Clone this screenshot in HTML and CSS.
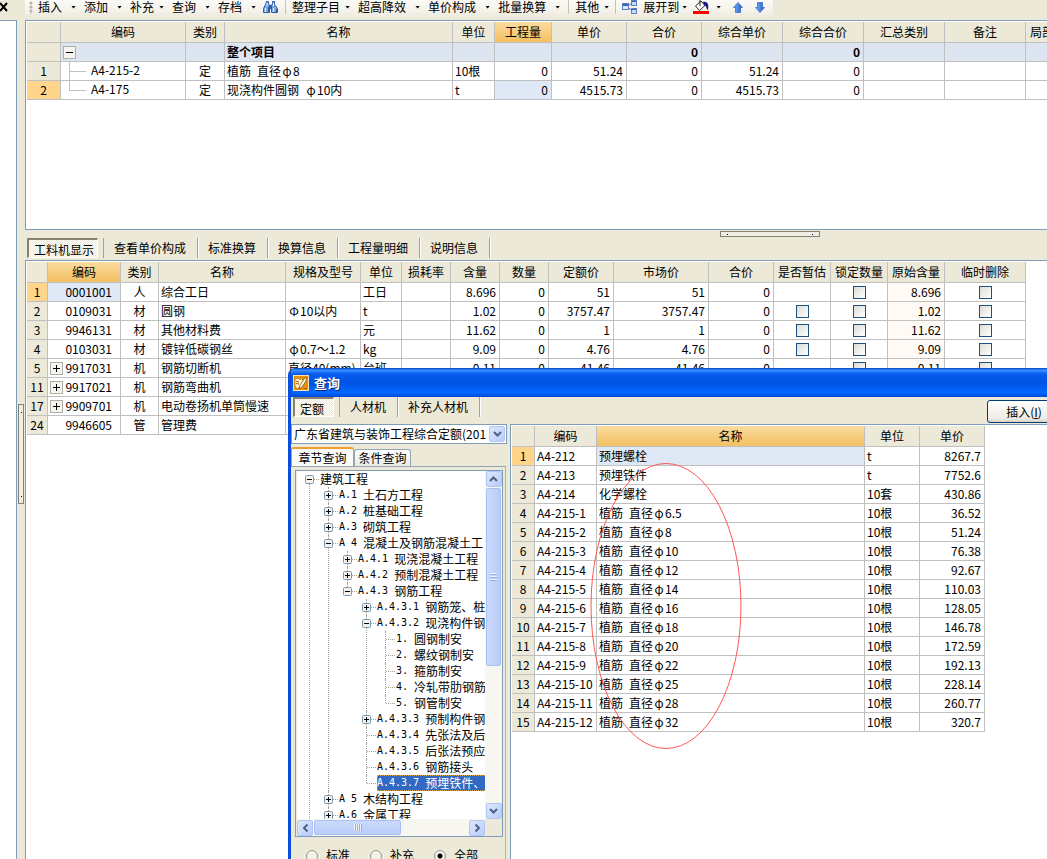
FILE: index.html
```html
<!DOCTYPE html>
<html lang="zh-CN">
<head>
<meta charset="utf-8">
<title>工程量计价</title>
<link rel="stylesheet" href="styles.css">
</head>
<body>
<svg class="defs" width="0" height="0" aria-hidden="true">
  <defs>
    <linearGradient id="blue" x1="0" y1="0" x2="1" y2="0"><stop offset="0" stop-color="#7fb4f5"/><stop offset="1" stop-color="#1c57c8"/></linearGradient>
    <symbol id="minus" viewBox="0 0 9 9"><rect x=".5" y=".5" width="8" height="8" rx="1" fill="#f4f2ea" stroke="#7898b5"/><path d="M2 4.500h5" stroke="#000"/></symbol>
    <symbol id="plus" viewBox="0 0 9 9"><rect x=".5" y=".5" width="8" height="8" rx="1" fill="#f4f2ea" stroke="#7898b5"/><path d="M2 4.500h5M4.500 2v5" stroke="#000"/></symbol>
    <symbol id="chev" viewBox="0 0 9 6"><path d="M1 1l3.500 3.500L8 1" fill="none" stroke="#4d6185" stroke-width="2"/></symbol>
  </defs>
</svg>
<div class="app">
  <aside class="side">
    <button class="close" aria-label="关闭"><svg width="9" height="10" viewBox="0 0 9 10"><path d="M0 1l7 8M7 1L0 9" stroke="#000" stroke-width="2"/></svg></button>
    <div class="side-body"></div>
  </aside>
  <div class="vsplit"><span class="vgrip"></span></div>
  <main class="main">
    <div class="topbar">
      <div class="toolbar">
        <span class="grip"></span>
        <button>插入<i></i></button>
        <button>添加<i></i></button>
        <button class="tight">补充<i></i></button>
        <button>查询<i></i></button>
        <button class="snug">存档<i></i></button>
        <button class="icon" aria-label="查找"><svg width="17" height="15" viewBox="0 0 17 15"><path d="M4.500 1.500h2v2l1 2v7h-6v-4l2-4zM10.500 1.500h2v3l3 4v4h-6v-7l1-2z" fill="#7fa6dc" stroke="#2f5fa8"/><path d="M7 5h3v4H7z" fill="#2f5fa8"/><path d="M3.500 8v4M11.500 8v4M5 3v3M11.500 3v3" stroke="#e6f0fc"/><path d="M6.500 7v6M14.500 9v4" stroke="#2b56a0"/></svg></button>
        <span class="sep"></span>
        <button class="tight">整理子目<i></i></button>
        <button>超高降效<i></i></button>
        <button>单价构成<i></i></button>
        <button>批量换算<i></i></button>
        <span class="sep"></span>
        <button class="tight snug">其他<i></i></button>
        <span class="sep"></span>
        <button class="tight snug"><svg width="16" height="15" viewBox="0 0 16 15"><path d="M6 6l4-3M6 7l4 4" stroke="#4a72c0" fill="none"/><rect x=".5" y="3.500" width="6" height="6" fill="#dceafb" stroke="#5a80c4"/><path d="M1 5h5" stroke="#3a66b8" stroke-width="2"/><rect x="9.500" y=".5" width="5" height="5" fill="#c9dcf6" stroke="#5a80c4"/><path d="M10 1.500h4" stroke="#3a66b8"/><rect x="9.500" y="8.500" width="5" height="5" fill="#c9dcf6" stroke="#5a80c4"/><path d="M10 9.500h4" stroke="#3a66b8"/></svg><span class="lbl">展开到</span><i></i></button>
        <button class="icon fill" aria-label="填充颜色"><svg width="16" height="16" viewBox="0 0 16 16"><path d="M2.500 7l5.500-5 4 4.500-5.500 5z" fill="#fff" stroke="#222"/><path d="M7 0v7" stroke="#222"/><path d="M10 3c5-1 6 3 5 8-2-1-1-4-4-5z" fill="#15158c"/><path d="M0 12h16v3H0z" fill="#f00"/></svg><i></i></button>
        <button class="icon arrow" aria-label="上移"><svg width="10" height="11" viewBox="0 0 10 11"><path d="M5 .5l4.500 5H7.500v5h-5v-5H.5z" fill="url(#blue)" stroke="#2a5fc4" stroke-width=".7"/></svg></button>
        <button class="icon arrow" aria-label="下移"><svg width="10" height="11" viewBox="0 0 10 11"><path d="M5 10.500L.5 5.500h2v-5h5v5h2z" fill="url(#blue)" stroke="#2a5fc4" stroke-width=".7"/></svg></button>
      </div>
    </div>
    <section class="pane upper">
      <table class="grid wide">
        <colgroup><col class="w34"><col class="w125"><col class="w39"><col class="w228"><col class="w42"><col class="w57"><col class="w75"><col class="w75"><col class="w81"><col class="w81"><col class="w81"><col class="w81"><col class="w57"></colgroup>
        <thead><tr><th></th><th>编码</th><th>类别</th><th>名称</th><th>单位</th><th class="on">工程量</th><th>单价</th><th>合价</th><th>综合单价</th><th>综合合价</th><th>汇总类别</th><th>备注</th><th>局部汇总</th></tr></thead>
        <tbody>
          <tr class="total"><th></th><td class="tog"><button class="box minus" aria-label="折叠"></button></td><td></td><td class="name">整个项目</td><td></td><td></td><td></td><td class="r">0</td><td></td><td class="r">0</td><td></td><td></td><td></td></tr>
          <tr><th>1</th><td class="tog"><span class="branch mid"></span>A4-215-2</td><td class="c">定</td><td class="name">植筋<span class="n"> </span>直径<span class="phi">φ</span>8</td><td>10根</td><td class="r">0</td><td class="r">51.24</td><td class="r">0</td><td class="r">51.24</td><td class="r">0</td><td></td><td></td><td></td></tr>
          <tr><th class="cur">2</th><td class="tog"><span class="branch end"></span>A4-175</td><td class="c">定</td><td class="name">现浇构件圆钢<span class="n"> </span><span class="phi">φ</span>10内</td><td>t</td><td class="r sel">0</td><td class="r">4515.73</td><td class="r">0</td><td class="r">4515.73</td><td class="r">0</td><td></td><td></td><td></td></tr>
        </tbody>
      </table>
    </section>
    <div class="hsplit"><span class="hgrip"></span>
      <nav class="tabs">
        <button class="pressed">工料机显示</button><button>查看单价构成</button><button>标准换算</button><button>换算信息</button><button>工程量明细</button><button>说明信息</button>
      </nav>
    </div>
    <section class="pane lower">
      <table class="grid detail">
        <colgroup><col class="w21"><col class="w73"><col class="w38"><col class="w127"><col class="w75"><col class="w41"><col class="w49"><col class="w49"><col class="w49"><col class="w65"><col class="w95"><col class="w65"><col class="w57"><col class="w57"><col class="w57"><col class="w81"></colgroup>
        <thead><tr><th></th><th class="on">编码</th><th>类别</th><th>名称</th><th>规格及型号</th><th>单位</th><th>损耗率</th><th>含量</th><th>数量</th><th>定额价</th><th>市场价</th><th>合价</th><th>是否暂估</th><th>锁定数量</th><th>原始含量</th><th>临时删除</th></tr></thead>
        <tbody>
          <tr><th class="cur">1</th><td class="code sel">0001001</td><td class="c">人</td><td>综合工日</td><td></td><td>工日</td><td></td><td class="r">8.696</td><td class="r">0</td><td class="r">51</td><td class="r">51</td><td class="r">0</td><td></td><td class="c"><input type="checkbox" aria-label="锁定数量"></td><td class="r orig">8.696</td><td class="c"><input type="checkbox" aria-label="临时删除"></td></tr>
          <tr><th>2</th><td class="code">0109031</td><td class="c">材</td><td>圆钢</td><td><span class="phi">Φ</span>10以内</td><td>t</td><td></td><td class="r">1.02</td><td class="r">0</td><td class="r">3757.47</td><td class="r">3757.47</td><td class="r">0</td><td class="c"><input type="checkbox" aria-label="是否暂估"></td><td class="c"><input type="checkbox" aria-label="锁定数量"></td><td class="r orig">1.02</td><td class="c"><input type="checkbox" aria-label="临时删除"></td></tr>
          <tr><th>3</th><td class="code">9946131</td><td class="c">材</td><td>其他材料费</td><td></td><td>元</td><td></td><td class="r">11.62</td><td class="r">0</td><td class="r">1</td><td class="r">1</td><td class="r">0</td><td class="c"><input type="checkbox" aria-label="是否暂估"></td><td class="c"><input type="checkbox" aria-label="锁定数量"></td><td class="r orig">11.62</td><td class="c"><input type="checkbox" aria-label="临时删除"></td></tr>
          <tr><th>4</th><td class="code">0103031</td><td class="c">材</td><td>镀锌低碳钢丝</td><td><span class="phi">φ</span>0.7～1.2</td><td>kg</td><td></td><td class="r">9.09</td><td class="r">0</td><td class="r">4.76</td><td class="r">4.76</td><td class="r">0</td><td class="c"><input type="checkbox" aria-label="是否暂估"></td><td class="c"><input type="checkbox" aria-label="锁定数量"></td><td class="r orig">9.09</td><td class="c"><input type="checkbox" aria-label="临时删除"></td></tr>
          <tr><th>5</th><td class="code"><button class="box plus" aria-label="展开"></button>9917031</td><td class="c">机</td><td>钢筋切断机</td><td>直径40(mm)</td><td>台班</td><td></td><td class="r">0.11</td><td class="r">0</td><td class="r">41.46</td><td class="r">41.46</td><td class="r">0</td><td></td><td class="c"><input type="checkbox" aria-label="锁定数量"></td><td class="r orig">0.11</td><td class="c"><input type="checkbox" aria-label="临时删除"></td></tr>
          <tr><th>11</th><td class="code"><button class="box plus" aria-label="展开"></button>9917021</td><td class="c">机</td><td>钢筋弯曲机</td><td></td><td></td><td></td><td></td><td></td><td></td><td></td><td></td><td></td><td></td><td></td><td></td></tr>
          <tr><th>17</th><td class="code"><button class="box plus" aria-label="展开"></button>9909701</td><td class="c">机</td><td>电动卷扬机单筒慢速</td><td></td><td></td><td></td><td></td><td></td><td></td><td></td><td></td><td></td><td></td><td></td><td></td></tr>
          <tr><th>24</th><td class="code">9946605</td><td class="c">管</td><td>管理费</td><td></td><td></td><td></td><td></td><td></td><td></td><td></td><td></td><td></td><td></td><td></td><td></td></tr>
        </tbody>
      </table>
    </section>
  </main>
</div>

<div class="dialog" role="dialog" aria-labelledby="dlg">
  <header class="title">
    <svg width="16" height="16" viewBox="0 0 16 16"><rect width="16" height="16" fill="#f6e3b0"/><rect x="1" y="1" width="14" height="14" fill="#e8920c"/><path d="M2 4l3-1 2 2 2-2 1 3-2 5-4 3-2-3z" fill="#fff6d8" stroke="#a65a00" stroke-width=".6"/><path d="M14 2l-1 4-4 6-3 2 1-4 4-6z" fill="#fffdf0" stroke="#8a4a00" stroke-width=".8"/><path d="M3 6l3 1M3 8.500l3 .5M10 13.500h4" stroke="#a65a00"/></svg>
    <h1 id="dlg">查询</h1>
  </header>
  <div class="dlg-body">
    <div class="dlg-top">
      <nav class="tabs">
        <button class="pressed">定额</button><button>人材机</button><button>补充人材机</button>
      </nav>
      <button class="insert">插入(<u>I</u>)</button>
    </div>
    <div class="cols">
      <div class="left">
        <label class="combo"><select aria-label="定额库"><option>广东省建筑与装饰工程综合定额(201</option></select><span class="xpbtn"><svg width="9" height="6"><use href="#chev"/></svg></span></label>
        <div class="pagetabs"><button class="active">章节查询</button><button>条件查询</button></div>
        <div class="page">
          <div class="treebox">
            <ul class="tree">
              <li><div><svg class="tg"><use href="#minus"/></svg>建筑工程</div>
                <ul>
                  <li><div><svg class="tg"><use href="#plus"/></svg><span class="n">A.1 </span>土石方工程</div></li>
                  <li><div><svg class="tg"><use href="#plus"/></svg><span class="n">A.2 </span>桩基础工程</div></li>
                  <li><div><svg class="tg"><use href="#plus"/></svg><span class="n">A.3 </span>砌筑工程</div></li>
                  <li><div><svg class="tg"><use href="#minus"/></svg><span class="n">A 4 </span>混凝土及钢筋混凝土工</div>
                    <ul>
                      <li><div><svg class="tg"><use href="#plus"/></svg><span class="n">A.4.1 </span>现浇混凝土工程</div></li>
                      <li><div><svg class="tg"><use href="#plus"/></svg><span class="n">A.4.2 </span>预制混凝土工程</div></li>
                      <li><div><svg class="tg"><use href="#minus"/></svg><span class="n">A.4.3 </span>钢筋工程</div>
                        <ul>
                          <li><div><svg class="tg"><use href="#plus"/></svg><span class="n">A.4.3.1 </span>钢筋笼、桩</div></li>
                          <li><div><svg class="tg"><use href="#minus"/></svg><span class="n">A.4.3.2 </span>现浇构件钢</div>
                            <ul>
                              <li><div><span class="tg"></span><span class="n">1. </span>圆钢制安</div></li>
                              <li><div><span class="tg"></span><span class="n">2. </span>螺纹钢制安</div></li>
                              <li><div><span class="tg"></span><span class="n">3. </span>箍筋制安</div></li>
                              <li><div><span class="tg"></span><span class="n">4. </span>冷轧带肋钢筋</div></li>
                              <li><div><span class="tg"></span><span class="n">5. </span>钢管制安</div></li>
                            </ul></li>
                          <li><div><svg class="tg"><use href="#plus"/></svg><span class="n">A.4.3.3 </span>预制构件钢</div></li>
                          <li><div><span class="tg"></span><span class="n">A.4.3.4 </span>先张法及后</div></li>
                          <li><div><span class="tg"></span><span class="n">A.4.3.5 </span>后张法预应</div></li>
                          <li><div><span class="tg"></span><span class="n">A.4.3.6 </span>钢筋接头</div></li>
                          <li><div><span class="tg"></span><span class="chosen"><span class="n">A.4.3.7 </span>预埋铁件、</span></div></li>
                        </ul></li>
                    </ul></li>
                  <li><div><svg class="tg"><use href="#plus"/></svg><span class="n">A 5 </span>木结构工程</div></li>
                  <li><div><svg class="tg"><use href="#plus"/></svg><span class="n">A.6 </span>金属工程</div></li>
                  <li><div></div></li>
                </ul></li>
              <li><div></div></li>
            </ul>
            <div class="vbar"><span class="xpbtn up"><svg width="9" height="6"><use href="#chev"/></svg></span><span class="thumb"></span><span class="xpbtn"><svg width="9" height="6"><use href="#chev"/></svg></span></div>
            <div class="hbar"><span class="xpbtn lt"><svg width="9" height="6"><use href="#chev"/></svg></span><span class="thumb"></span><span class="xpbtn rt"><svg width="9" height="6"><use href="#chev"/></svg></span></div>
          </div>
          <div class="radios">
            <label><input type="radio" name="scope">标准</label>
            <label><input type="radio" name="scope">补充</label>
            <label><input type="radio" name="scope" checked>全部</label>
          </div>
        </div>
      </div>
      <div class="right">
        <table class="grid result">
          <colgroup><col class="w23"><col class="w62"><col class="w268"><col class="w55"><col class="w65"></colgroup>
          <thead><tr><th></th><th>编码</th><th class="on">名称</th><th>单位</th><th>单价</th></tr></thead>
          <tbody>
            <tr><th class="cur">1</th><td>A4-212</td><td class="sel">预埋螺栓</td><td>t</td><td class="r">8267.7</td></tr>
            <tr><th>2</th><td>A4-213</td><td>预埋铁件</td><td>t</td><td class="r">7752.6</td></tr>
            <tr><th>3</th><td>A4-214</td><td>化学螺栓</td><td>10套</td><td class="r">430.86</td></tr>
            <tr><th>4</th><td>A4-215-1</td><td>植筋<span class="n"> </span>直径<span class="phi">φ</span>6.5</td><td>10根</td><td class="r">36.52</td></tr>
            <tr><th>5</th><td>A4-215-2</td><td>植筋<span class="n"> </span>直径<span class="phi">φ</span>8</td><td>10根</td><td class="r">51.24</td></tr>
            <tr><th>6</th><td>A4-215-3</td><td>植筋<span class="n"> </span>直径<span class="phi">φ</span>10</td><td>10根</td><td class="r">76.38</td></tr>
            <tr><th>7</th><td>A4-215-4</td><td>植筋<span class="n"> </span>直径<span class="phi">φ</span>12</td><td>10根</td><td class="r">92.67</td></tr>
            <tr><th>8</th><td>A4-215-5</td><td>植筋<span class="n"> </span>直径<span class="phi">φ</span>14</td><td>10根</td><td class="r">110.03</td></tr>
            <tr><th>9</th><td>A4-215-6</td><td>植筋<span class="n"> </span>直径<span class="phi">φ</span>16</td><td>10根</td><td class="r">128.05</td></tr>
            <tr><th>10</th><td>A4-215-7</td><td>植筋<span class="n"> </span>直径<span class="phi">φ</span>18</td><td>10根</td><td class="r">146.78</td></tr>
            <tr><th>11</th><td>A4-215-8</td><td>植筋<span class="n"> </span>直径<span class="phi">φ</span>20</td><td>10根</td><td class="r">172.59</td></tr>
            <tr><th>12</th><td>A4-215-9</td><td>植筋<span class="n"> </span>直径<span class="phi">φ</span>22</td><td>10根</td><td class="r">192.13</td></tr>
            <tr><th>13</th><td>A4-215-10</td><td>植筋<span class="n"> </span>直径<span class="phi">φ</span>25</td><td>10根</td><td class="r">228.14</td></tr>
            <tr><th>14</th><td>A4-215-11</td><td>植筋<span class="n"> </span>直径<span class="phi">φ</span>28</td><td>10根</td><td class="r">260.77</td></tr>
            <tr><th>15</th><td>A4-215-12</td><td>植筋<span class="n"> </span>直径<span class="phi">φ</span>32</td><td>10根</td><td class="r">320.7</td></tr>
          </tbody>
        </table>
        <svg class="mark" width="152" height="288" viewBox="0 0 152 288"><ellipse cx="76" cy="144" rx="75" ry="142.500" fill="none" stroke="#f55" /></svg>
      </div>
    </div>
  </div>
</div>
</body>
</html>
```
FILE: styles.css
```css
* { box-sizing: border-box; }
html, body { height: 100%; }
body {
  margin: 0;
  overflow: hidden;
  background: #ece9d8;
  color: #000;
  font: 12px/14px "Noto Sans CJK SC", sans-serif;
}
button, select { font: inherit; color: inherit; border: 0; padding: 0; margin: 0; background: none; white-space: nowrap; }
.defs { position: absolute; }
.n { font-family: "DejaVu Sans Mono", "Noto Sans CJK SC", monospace; font-size: 10px; line-height: 10px; white-space: pre; }
.phi { display: inline-block; width: 12px; text-align: center; }

.app { display: flex; height: 100%; }
.side { width: 17px; display: flex; flex-direction: column; flex: none; }
.close { height: 20px; display: flex; padding-top: 2px; }
.side-body { flex: 1; background: #fff; border: solid #7f9db9; border-width: 1px 1px 0 0; }
.vsplit { width: 8px; flex: none; display: flex; justify-content: center; padding-top: 404px; }
.vgrip { width: 6px; height: 100px; border: 1px solid #85836f; background: linear-gradient(#00008b, #00008b) center 7px / 1px 1px no-repeat, linear-gradient(#00008b, #00008b) center 91px / 1px 1px no-repeat, #f0eee2; }
.main { flex: 1; min-width: 0; display: flex; flex-direction: column; }

/* toolbar */
.topbar { height: 20px; flex: none; display: flex; }
.toolbar { display: flex; align-items: center; height: 20px; padding: 0 2px 6px 4px; background: linear-gradient(#fbfaf7, #f3f1e8 60%, #e9e6d6); white-space: nowrap; }
.toolbar button { display: flex; align-items: center; gap: 9px; padding-right: 8px; flex: none; }
.toolbar button.tight { gap: 5px; }
.toolbar button.snug { padding-right: 6px; }
.toolbar i { width: 5px; height: 3px; background: #000; clip-path: polygon(0 0, 100% 0, 50% 100%); }
.toolbar .grip { width: 9px; height: 13px; background: radial-gradient(circle at 2px 2px, #b8b5a5 1px, transparent 2px) 0 0 / 9px 4px; }
.toolbar button.icon { gap: 7px; padding-right: 6px; }
.toolbar button.arrow { padding: 0 6px; }
.toolbar .sep { width: 1px; height: 14px; background: #c5c2b2; margin-right: 6px; flex: none; }
.toolbar .lbl { margin-right: -2px; }

/* panes */
.pane { background: #fff; border: 1px solid #7f9db9; border-right: 0; padding: 1px 0 0 1px; overflow: hidden; }
.upper { height: 210px; flex: none; }
.lower { flex: 1; border-bottom: 0; }
.hsplit { height: 30px; flex: none; position: relative; padding: 8px 0 0 2px; }
.hgrip { position: absolute; top: 1px; left: 68%; width: 100px; height: 6px; border: 1px solid #85836f; background: linear-gradient(#00008b, #00008b) 6px center / 1px 1px no-repeat, linear-gradient(#00008b, #00008b) 91px center / 1px 1px no-repeat, #f0eee2; }

/* grids */
.grid { table-layout: fixed; border-collapse: separate; border-spacing: 0; }
.wide { width: 1056px; }
.detail { width: 999px; }
.result { width: 473px; }
.grid th, .grid td { height: 19px; padding: 0 2px; border: solid #c0c0c0; border-width: 0 1px 1px 0; line-height: 16px; font-weight: 400; text-align: left; white-space: nowrap; overflow: hidden; }
.grid th { background: #ece9d8; text-align: center; padding: 0; }
.grid thead th { height: 21px; }
.grid th.on { background: linear-gradient(#fadc9f, #f3bf62); }
.grid th.cur { background: #ffd58c; }
.grid td.sel { background: #dfe8f5; }
.grid td.c { text-align: center; padding: 0; }
.grid td.r { text-align: right; padding-right: 3px; }
.grid td.code { text-align: right; padding-right: 8px; }
.grid td.orig { background: #fffaf5; }
.grid .total td { background: #dde6f0; font-weight: 700; }
.grid input { appearance: none; display: block; width: 13px; height: 13px; margin: 0 auto; border: 1px solid #1c5180; background: linear-gradient(135deg, #dcdcd7, #fff); }
.box { display: inline-block; width: 13px; height: 13px; border: 1px solid #b0aea2; vertical-align: middle; background: linear-gradient(#000, #000) center / 7px 1px no-repeat, #f6f5f0; }
.box.plus { float: left; margin: 2px 0; background: linear-gradient(#000, #000) center / 7px 1px no-repeat, linear-gradient(#000, #000) center / 1px 7px no-repeat, #f6f5f0; }
.tog .box { display: block; }
.branch { display: block; float: left; width: 16px; height: 18px; margin: 0 6px; }
.branch::before { content: ""; display: block; width: 16px; height: 9px; border: solid #c0c0c0; border-width: 0 0 1px 1px; }
.branch.mid::after { content: ""; display: block; width: 1px; height: 9px; background: #c0c0c0; }

/* flat tabs */
.tabs { display: flex; height: 20px; }
.tabs button { padding: 0 11px 0 10px; border-right: 1px solid #a5a293; box-shadow: 1px 0 #fff; }
.tabs .pressed { padding: 2px 3px 0 5px; margin-right: 5px; border: solid; border-width: 2px 1px 1px 2px; border-color: #85836f #fff #fff #85836f; background: repeating-conic-gradient(#ece9d8 0 25%, #fff 0 50%) 0 0 / 2px 2px; box-shadow: none; }
.tabs .pressed + button { border-left: 1px solid #a5a293; }

/* dialog */
.dialog { position: absolute; left: 288px; top: 368px; right: 0; bottom: 0; display: flex; flex-direction: column; overflow: hidden; border-left: 3px solid #0a4ee0; border-top-left-radius: 7px; background: #ece9d8; }
.title { height: 29px; flex: none; display: flex; align-items: center; gap: 5px; padding: 1px 0 0 3px; margin-left: -1px; background: linear-gradient(#0842c8, #3a93ff 8%, #0a5cf0 20%, #0054e3 50%, #0268ff 85%, #0047d0); }
.title h1 { margin: 0; font-size: 13px; line-height: 16px; font-weight: 700; color: #fff; text-shadow: 1px 1px #0a2a80; }
.dlg-body { flex: 1; min-height: 0; display: flex; flex-direction: column; }
.dlg-top { display: flex; justify-content: space-between; height: 27px; flex: none; padding-left: 2px; }
.dlg-top .tabs .pressed { padding-right: 9px; }
.insert { width: 74px; height: 23px; margin: 3px -14px 0 0; border: 1px solid #003c74; border-radius: 3px; background: linear-gradient(#fff, #ecebe5 85%, #d6d0c5); }
.cols { flex: 1; min-height: 0; display: flex; gap: 3px; }
.left { width: 216px; flex: none; display: flex; flex-direction: column; min-height: 0; }
.combo { display: flex; height: 20px; border: 1px solid #7f9db9; background: #fff; padding: 1px; flex: none; }
.combo select { flex: 1; min-width: 0; appearance: none; height: 16px; padding: 0 0 0 1px; line-height: 16px; outline: 0; }
.xpbtn { display: flex; align-items: center; justify-content: center; flex: none; width: 16px; height: 16px; border: 1px solid #b0c6f5; border-radius: 2px; background: linear-gradient(135deg, #dce7fe, #b9cdf8); }
.xpbtn.up svg { transform: rotate(180deg); }
.xpbtn.lt svg { transform: rotate(90deg); }
.xpbtn.rt svg { transform: rotate(-90deg); }
.pagetabs { display: flex; align-items: flex-end; height: 22px; padding-top: 3px; flex: none; }
.pagetabs button { height: 17px; width: 57px; border: 1px solid #91a7b4; border-bottom: 0; border-radius: 3px 3px 0 0; background: linear-gradient(#fff, #ecebe6); }
.pagetabs .active { height: 19px; width: 63px; border-top: 2px solid #f0a02c; background: #fbfbf9; }
.page { flex: 1; min-height: 0; display: flex; flex-direction: column; margin-right: 1px; border: solid #91a7b4; border-width: 1px 1px 0 0; border-right-color: #b5b3a4; padding: 3px 2px 0 4px; background: #ece9d8; }
.treebox { flex: 1; min-height: 0; display: grid; grid-template: minmax(0, 1fr) 17px / minmax(0, 1fr) 17px; border: 1px solid #7f9db9; padding: 0 0 0 1px; background: #ece9d8; }
.tree, .tree ul { list-style: none; margin: 0; padding: 0; }
.tree { overflow: hidden; background: #fff; padding-left: 8px; }
.tree ul { padding-left: 19px; }
.tree li { position: relative; }
.tree li::before { content: ""; position: absolute; left: 4px; top: 0; bottom: 0; border-left: 1px dotted #a5a293; }
.tree > li:first-child::before { top: 8px; }
.tree li:last-child::before { bottom: auto; height: 8px; }
.tree li > div { position: relative; display: flex; align-items: center; height: 16px; line-height: 16px; white-space: nowrap; }
.tree li > div::before { content: ""; position: absolute; left: 5px; top: 8px; width: 9px; border-top: 1px dotted #a5a293; }
.tg { position: relative; width: 9px; height: 9px; margin-right: 6px; flex: none; }
.tree .chosen { display: flex; align-items: center; height: 16px; padding-right: 20px; background: #316ac5; color: #fff; outline: 1px dotted #d8a54a; outline-offset: -1px; }
.vbar { display: flex; flex-direction: column; align-items: center; background: #f7f6f1; }
.vbar .thumb { width: 15px; flex: 0 1 178px; margin: 1px 0 auto; border: 1px solid #a9c0f2; border-radius: 2px; background: repeating-linear-gradient(#eef4fe 0 1px, #8cb0f8 1px 2px, transparent 2px 3px) center / 7px 9px no-repeat, linear-gradient(90deg, #cbdafd, #b9cdf8); }
.hbar { display: flex; align-items: center; background: #f7f6f1; }
.hbar .thumb { height: 15px; flex: 0 1 87px; margin: 0 auto 0 1px; border: 1px solid #a9c0f2; border-radius: 2px; background: repeating-linear-gradient(90deg, #eef4fe 0 1px, #8cb0f8 1px 2px) center / 8px 7px no-repeat, linear-gradient(#cbdafd, #b9cdf8); }
.radios { height: 22px; flex: none; display: flex; gap: 20px; padding: 11px 0 0 11px; }
.radios label { display: flex; gap: 8px; flex: none; }
.radios input { appearance: none; width: 12px; height: 12px; margin: 2px 0 0; border: 1px solid #9a988b; border-radius: 50%; background: #f4f2ea; }
.radios input:checked { background: radial-gradient(#000 2px, transparent 3px), #f4f2ea; }
.right { flex: 1; min-width: 0; position: relative; border: solid #7f9db9; border-width: 1px 0 0 1px; padding: 1px 0 0 1px; background: #fff; }
.mark { position: absolute; left: 79px; top: 37px; pointer-events: none; }

/* column widths */
.w21 { width: 21px; } .w23 { width: 23px; } .w34 { width: 34px; } .w38 { width: 38px; } .w39 { width: 39px; }
.w41 { width: 41px; } .w42 { width: 42px; } .w49 { width: 49px; } .w55 { width: 55px; } .w57 { width: 57px; }
.w62 { width: 62px; } .w65 { width: 65px; } .w73 { width: 73px; } .w75 { width: 75px; } .w81 { width: 81px; }
.w95 { width: 95px; } .w125 { width: 125px; } .w127 { width: 127px; } .w228 { width: 228px; } .w268 { width: 268px; }
```
